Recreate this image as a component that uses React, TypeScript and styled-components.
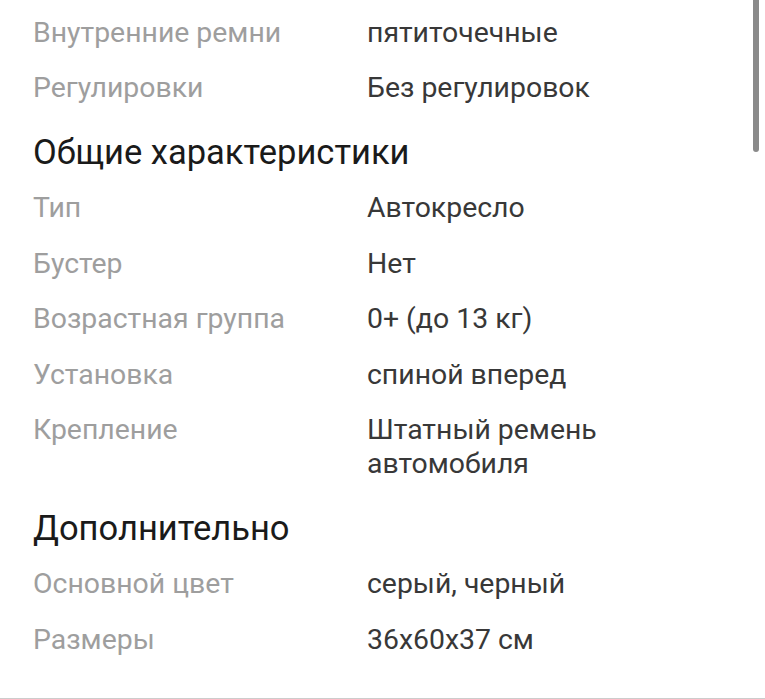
import React from "react";
import styled, { createGlobalStyle } from "styled-components";

const GlobalStyle = createGlobalStyle`
  html, body {
    margin: 0;
    padding: 0;
    background: #ffffff;
  }
  body {
    font-family: Roboto, "Noto Sans", sans-serif;
  }
`;

const Screen = styled.div`
  position: relative;
  width: 765px;
  height: 699px;
  overflow: hidden;
  background: #fff;
  border-bottom: 1px solid #cccccc;
  box-sizing: border-box;
`;

const Content = styled.div`
  padding: 5px 0 0 33px;
`;

const Row = styled.div`
  display: grid;
  grid-template-columns: 334px 1fr;
  padding: 10.75px 0;
  font-size: 28.4px;
  line-height: 34px;
`;

const Label = styled.div`
  color: #9e9e9e;
`;

const Value = styled.div`
  color: #383838;
  max-width: 300px;
`;

const SectionTitle = styled.h2`
  margin: 0;
  padding: 18.5px 0 12px;
  font-size: 34.5px;
  font-weight: 400;
  line-height: 34px;
  color: #1a1a1a;
`;

const Scrollbar = styled.div`
  position: absolute;
  top: 0;
  right: 6px;
  width: 6px;
  height: 152px;
  border-radius: 0 0 3px 3px;
  background: #8a8a8a;
`;

type Spec = { label: string; value: string };
type Section = { title?: string; items: Spec[] };

const sections: Section[] = [
  {
    items: [
      { label: "Внутренние ремни", value: "пятиточечные" },
      { label: "Регулировки", value: "Без регулировок" },
    ],
  },
  {
    title: "Общие характеристики",
    items: [
      { label: "Тип", value: "Автокресло" },
      { label: "Бустер", value: "Нет" },
      { label: "Возрастная группа", value: "0+ (до 13 кг)" },
      { label: "Установка", value: "спиной вперед" },
      { label: "Крепление", value: "Штатный ремень автомобиля" },
    ],
  },
  {
    title: "Дополнительно",
    items: [
      { label: "Основной цвет", value: "серый, черный" },
      { label: "Размеры", value: "36x60x37 см" },
    ],
  },
];

const App = () => {
  return (
    <Screen>
      <GlobalStyle />
      <Content>
        {sections.map((section, i) => (
          <div key={i}>
            {section.title && <SectionTitle>{section.title}</SectionTitle>}
            {section.items.map((item) => (
              <Row key={item.label}>
                <Label>{item.label}</Label>
                <Value>{item.value}</Value>
              </Row>
            ))}
          </div>
        ))}
      </Content>
      <Scrollbar />
    </Screen>
  );
};

export default App;
